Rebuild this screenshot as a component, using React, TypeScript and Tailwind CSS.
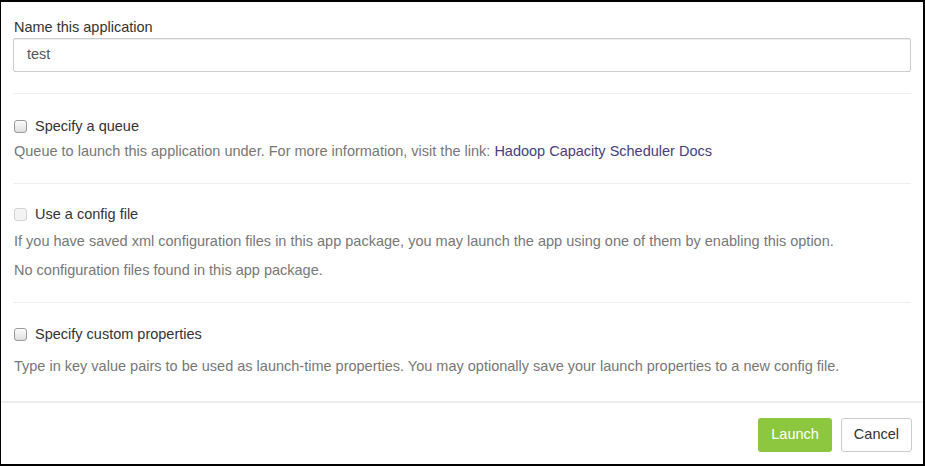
const font = { fontFamily: '"Liberation Sans", Arial, sans-serif' };

function Box({ disabled }: { disabled?: boolean }) {
  return (
    <span
      className={
        disabled
          ? 'inline-block w-[13px] h-[13px] rounded-[3px] border border-[#d4d4d4] bg-[#f3f3f3]'
          : 'inline-block w-[13px] h-[13px] rounded-[3px] border border-[#9a9a9a] bg-gradient-to-b from-[#fcfcfc] to-[#dedede]'
      }
    />
  );
}

function Check({ label, disabled }: { label: string; disabled?: boolean }) {
  return (
    <label className="flex items-center h-5 text-[14.5px] leading-5 text-[#333]">
      <span className="flex items-center">
        <Box disabled={disabled} />
      </span>
      <span className="ml-[8px]">{label}</span>
    </label>
  );
}

export default function App() {
  return (
    <div
      className="w-[925px] h-[466px] bg-white border-t-2 border-r-2 border-b-2 border-l border-black flex flex-col"
      style={font}
    >
      <div className="flex-1 px-[12px] pt-[15px]">
        <div className="pl-px text-[14.5px] leading-5 text-[#333]">Name this application</div>
        <div className="mt-px h-[34px] border border-[#ccc] rounded-[2px] flex items-center px-[13px] text-[14.5px] text-[#555] shadow-[inset_0_1px_1px_rgba(0,0,0,0.075)]">
          test
        </div>

        <div className="mt-[21px] border-t border-[#eee]" />

        <div className="pt-[22px] pl-px">
          <Check label="Specify a queue" />
          <p className="mt-[5px] text-[14.5px] leading-5 text-[#777]">
            Queue to launch this application under. For more information, visit the link:{' '}
            <a className="text-[#46407e]">Hadoop Capacity Scheduler Docs</a>
          </p>
        </div>

        <div className="mt-[22px] border-t border-[#eee]" />

        <div className="pt-[20px] pl-px">
          <Check label="Use a config file" disabled />
          <p className="mt-[7px] text-[14.5px] leading-5 text-[#777]">
            If you have saved xml configuration files in this app package, you may launch the app using one of them by enabling this option.
          </p>
          <p className="mt-[9px] text-[14.5px] leading-5 text-[#777]">No configuration files found in this app package.</p>
        </div>

        <div className="mt-[22px] border-t border-[#eee]" />

        <div className="pt-[21px] pl-px">
          <Check label="Specify custom properties" />
          <p className="mt-[12px] text-[14.5px] leading-5 text-[#777]">
            Type in key value pairs to be used as launch-time properties. You may optionally save your launch properties to a new config file.
          </p>
        </div>
      </div>

      <div className="border-t-2 border-[#eee] px-[11px] pt-[15px] pb-[12px] flex justify-end gap-[9px]">
        <button className="h-[34px] px-[13px] rounded-[3px] bg-[#8dc63f] text-white text-[14.5px]">Launch</button>
        <button className="h-[34px] px-[12px] rounded-[3px] border border-[#ccc] bg-white text-[#333] text-[14.5px]">
          Cancel
        </button>
      </div>
    </div>
  );
}
